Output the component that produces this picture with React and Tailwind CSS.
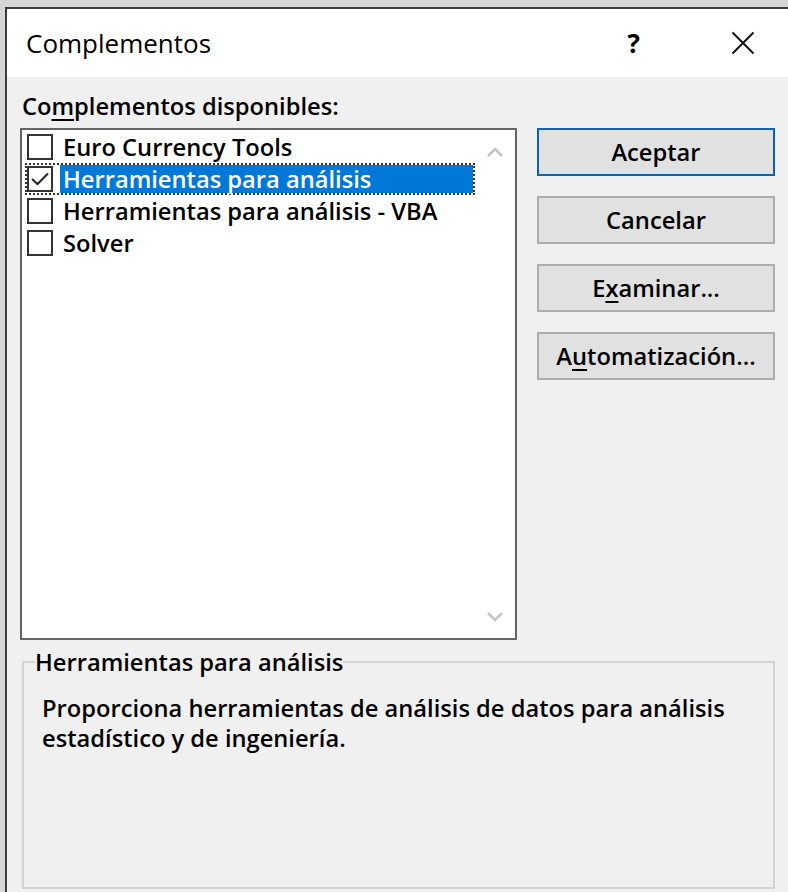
import React from "react";

function Check({ checked }) {
  return (
    <div className="w-[26px] h-[26px] border-2 border-[#333] bg-white shrink-0 flex items-center justify-center">
      {checked && (
        <svg width="20" height="16" viewBox="0 0 20 16">
          <path d="M2 8 L7.5 13 L18 2.5" fill="none" stroke="#222" strokeWidth="2" />
        </svg>
      )}
    </div>
  );
}

function Row({ label, checked, selected }) {
  return (
    <div className="h-[32px] flex items-stretch">
      <div
        className={
          "ml-[3px] flex items-center border-2 " +
          (selected ? "border-dotted border-[#333]" : "border-transparent")
        }
      >
        <Check checked={checked} />
        <div
          className={
            "ml-[7px] w-[413px] h-full flex items-center pl-[3px] whitespace-nowrap " +
            (selected ? "bg-[#0078d7] text-white" : "text-black")
          }
        >
          {label}
        </div>
      </div>
    </div>
  );
}

function Btn({ children, primary }) {
  return (
    <div
      className={
        "h-[48px] w-[238px] bg-[#e1e1e1] flex items-center justify-center text-black " +
        (primary ? "border-2 border-[#0a63b0]" : "border-2 border-[#adadad]")
      }
    >
      {children}
    </div>
  );
}

export default function App() {
  return (
    <div
      className="w-[788px] h-[892px] bg-[#d6d6d6] pt-[7px] pl-[5px] overflow-hidden flex flex-col text-[23.7px] font-semibold leading-[30px]"
      style={{ fontFamily: '"Open Sans", "Noto Sans", sans-serif' }}
    >
      <div className="flex-1 flex flex-col border-l-2 border-t-2 border-[#3c3c3c] bg-[#f0f0f0]">
        {/* title bar */}
        <div className="h-[68px] bg-white flex items-center shrink-0">
          <div className="ml-[19px] text-[26px] font-normal text-black">Complementos</div>
          <div className="ml-auto mr-[91px] text-[26px] font-bold text-black">?</div>
          <div className="mr-[33px]">
            <svg width="24" height="24" viewBox="0 0 24 24">
              <path d="M1.5 1.5 L22.5 22.5 M22.5 1.5 L1.5 22.5" stroke="#111" strokeWidth="2" fill="none" />
            </svg>
          </div>
        </div>

        {/* body */}
        <div className="flex-1 px-[13px] pt-[14px]">
          <div className="ml-[2px] text-black">
            Co<span className="underline underline-offset-[4px]">m</span>plementos disponibles:
          </div>
          <div className="flex mt-[7px]">
            <div className="w-[497px] h-[512px] border-2 border-[#646464] bg-white flex">
              <div className="flex-1 pt-[1px]">
                <Row label="Euro Currency Tools" />
                <Row label="Herramientas para análisis" checked selected />
                <Row label="Herramientas para análisis - VBA" />
                <Row label="Solver" />
              </div>
              <div className="w-[40px] flex flex-col items-center justify-between pt-[16px] pb-[15px]">
                <svg width="18" height="12" viewBox="0 0 18 12">
                  <path d="M2 10 L9 3 L16 10" fill="none" stroke="#c4c4c4" strokeWidth="2.5" />
                </svg>
                <svg width="18" height="12" viewBox="0 0 18 12">
                  <path d="M2 2 L9 9 L16 2" fill="none" stroke="#c4c4c4" strokeWidth="2.5" />
                </svg>
              </div>
            </div>
            <div className="ml-[20px] flex flex-col gap-[20px]">
              <Btn primary>Aceptar</Btn>
              <Btn>Cancelar</Btn>
              <Btn>
                <span>
                  E<span className="underline underline-offset-[4px]">x</span>aminar...
                </span>
              </Btn>
              <Btn>
                <span>
                  A<span className="underline underline-offset-[4px]">u</span>tomatización...
                </span>
              </Btn>
            </div>
          </div>
          <fieldset className="mt-[7px] ml-[2px] w-[753px] h-[242px] border-2 border-[#d4d4d4] p-0">
            <legend className="ml-[11px] text-black">Herramientas para análisis</legend>
            <div className="text-black leading-[30px] pl-[18px] pt-[16px]">
              Proporciona herramientas de análisis de datos para análisis
              <br />
              estadístico y de ingeniería.
            </div>
          </fieldset>
        </div>
      </div>
    </div>
  );
}
